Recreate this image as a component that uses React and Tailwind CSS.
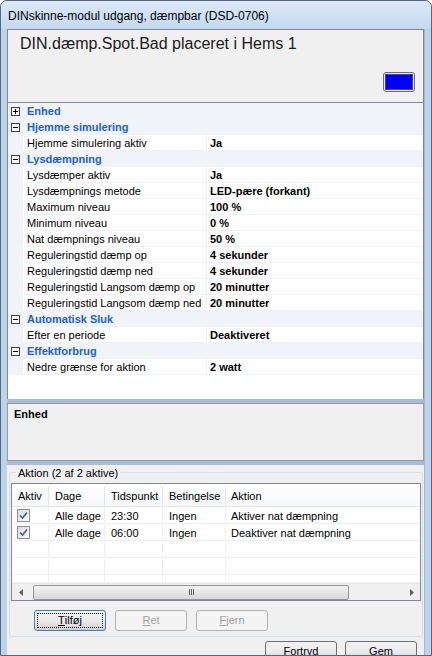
import React from "react";

const rows = [
  { cat: "Enhed", open: false },
  { cat: "Hjemme simulering", open: true },
  { name: "Hjemme simulering aktiv", value: "Ja" },
  { cat: "Lysdæmpning", open: true },
  { name: "Lysdæmper aktiv", value: "Ja" },
  { name: "Lysdæmpnings metode", value: "LED-pære (forkant)" },
  { name: "Maximum niveau", value: "100 %" },
  { name: "Minimum niveau", value: "0 %" },
  { name: "Nat dæmpnings niveau", value: "50 %" },
  { name: "Reguleringstid dæmp op", value: "4 sekunder" },
  { name: "Reguleringstid dæmp ned", value: "4 sekunder" },
  { name: "Reguleringstid Langsom dæmp op", value: "20 minutter" },
  { name: "Reguleringstid Langsom dæmp ned", value: "20 minutter" },
  { cat: "Automatisk Sluk", open: true },
  { name: "Efter en periode", value: "Deaktiveret" },
  { cat: "Effektforbrug", open: true },
  { name: "Nedre grænse for aktion", value: "2 watt" },
];

const actions = [
  { dage: "Alle dage", tid: "23:30", bet: "Ingen", akt: "Aktiver nat dæmpning" },
  { dage: "Alle dage", tid: "06:00", bet: "Ingen", akt: "Deaktiver nat dæmpning" },
];

function Expander({ open }) {
  return (
    <div className="w-[9px] h-[9px] border border-[#404040] bg-white flex items-center justify-center relative">
      <div className="w-[5px] h-[1px] bg-black" />
      {!open && <div className="absolute w-[1px] h-[5px] bg-black" />}
    </div>
  );
}

function Check() {
  return (
    <div className="w-[13px] h-[13px] border border-[#8f8f8f] bg-gradient-to-br from-[#dcdcdc] to-[#fbfbfb] flex items-center justify-center">
      <svg width="9" height="9" viewBox="0 0 9 9">
        <path d="M1 4.5 L3.5 7 L8 1.5" stroke="#4a5f97" strokeWidth="1.7" fill="none" />
      </svg>
    </div>
  );
}

function Btn({ u, rest, disabled, def }) {
  return (
    <div
      className={
        "w-[72px] h-[21px] rounded-[3px] flex items-center justify-center text-[11px] " +
        (disabled
          ? "border border-[#adb2b5] bg-[#f4f4f4] text-[#a0a0a0]"
          : def
          ? "border border-[#3c7fb1] bg-gradient-to-b from-[#f2f2f2] via-[#ebebeb] to-[#cfcfcf] text-black"
          : "border border-[#707070] bg-gradient-to-b from-[#f2f2f2] via-[#ebebeb] to-[#cfcfcf] text-black")
      }
    >
      <div
        className={
          "flex items-center justify-center " +
          (def ? "w-[66px] h-[15px] border border-dotted border-black" : "")
        }
      >
        <span className="underline">{u}</span>
        <span>{rest}</span>
      </div>
    </div>
  );
}

export default function App() {
  return (
    <div
      className="w-[432px] h-[656px] overflow-hidden flex flex-col bg-[#bcd3ec] border border-[#56677c] rounded-t-[7px]"
      style={{ fontFamily: '"Liberation Sans", Arial, sans-serif' }}
    >
      {/* title bar */}
      <div className="h-[28px] shrink-0 flex items-center pl-[7px] pt-[2px] bg-gradient-to-b from-[#dde9f7] via-[#d0e1f4] to-[#c3d8ef] text-[12px] text-black rounded-t-[6px]">
        DINskinne-modul udgang, dæmpbar (DSD-0706)
      </div>

      <div className="flex flex-1 min-h-0">
        <div className="w-[6px] shrink-0 bg-[#bcd3ec]" />
        <div className="w-[417px] shrink-0 flex flex-col bg-[#f0f0f0]">
          {/* header */}
          <div className="h-[74px] shrink-0 border border-[#828790] bg-[#f0f0f0] flex flex-col px-[12px] pt-[4px]">
            <div className="text-[16px] text-[#1a1a1a] leading-[20px]">DIN.dæmp.Spot.Bad placeret i Hems 1</div>
            <div className="flex justify-end mt-[18px] -mr-[4px]">
              <div className="w-[32px] h-[20px] rounded-[3px] border border-[#6e6e6e] bg-[#f0f0f0] p-[1px]">
                <div className="w-full h-full bg-[#0000ff] border border-[#4040c0]" />
              </div>
            </div>
          </div>

          {/* property grid */}
          <div className="h-[296px] shrink-0 bg-white border-x border-[#828790] flex flex-col">
            {rows.map((r, i) =>
              r.cat ? (
                <div key={i} className="h-[16px] flex items-center bg-[#f0f3f8] border-b border-[#eef1f6] pt-[1px]">
                  <div className="w-[15px] pl-[3px] flex items-center">
                    <Expander open={r.open} />
                  </div>
                  <div className="pl-[4px] text-[11px] font-bold text-[#2160d6] leading-none">{r.cat}</div>
                </div>
              ) : (
                <div key={i} className="h-[16px] flex items-stretch">
                  <div className="w-[15px] bg-[#f0f3f8]" />
                  <div className="w-[184px] border-b border-r border-[#eef1f6] pl-[4px] pt-[1px] flex items-center text-[11px] text-black leading-none whitespace-nowrap">
                    {r.name}
                  </div>
                  <div className="flex-1 border-b border-[#eef1f6] pl-[3px] pt-[1px] flex items-center text-[11px] font-bold text-black leading-none">
                    {r.value}
                  </div>
                </div>
              )
            )}
            <div className="flex-1" />
          </div>

          <div className="h-[4px] shrink-0 bg-[#a6bedb]" />

          {/* description */}
          <div className="h-[58px] shrink-0 border border-[#9a9a9a] bg-[#f0f0f0] pl-[6px] pt-[2px]">
            <div className="text-[11px] font-bold text-black">Enhed</div>
          </div>

          <div className="h-[4px] shrink-0 bg-[#a6bedb]" />

          {/* lower area */}
          <div className="flex-1 flex flex-col pl-[2px] pr-[1px]">
            <div className="relative mt-[7px] h-[165px] border border-[#d5dfe5] rounded-[3px] flex flex-col pl-[1px] pr-[1px] pt-[10px]">
              <div className="absolute -top-[6px] left-[6px] px-[2px] bg-[#f0f0f0] text-[11px] leading-[13px] text-black whitespace-nowrap">
                Aktion (2 af 2 aktive)
              </div>

              {/* list view */}
              <div className="h-[118px] border border-[#828790] bg-white flex flex-col text-[11px] text-black whitespace-nowrap">
                <div className="h-[23px] shrink-0 flex border-b border-[#e5e5e5] bg-gradient-to-b from-white to-[#f7f8fa] pt-[2px]">
                  <div className="w-[37px] pl-[6px] flex items-center border-r border-[#e3e5e8]">Aktiv</div>
                  <div className="w-[56px] pl-[6px] flex items-center border-r border-[#e3e5e8]">Dage</div>
                  <div className="w-[58px] pl-[6px] flex items-center border-r border-[#e3e5e8]">Tidspunkt</div>
                  <div className="w-[63px] pl-[6px] flex items-center border-r border-[#e3e5e8]">Betingelse</div>
                  <div className="flex-1 pl-[5px] flex items-center">Aktion</div>
                </div>
                {[0, 1, 2, 3, 4].map((i) => {
                  const a = actions[i];
                  const h = i === 4 ? "h-[8px]" : "h-[17px] pt-[1px]";
                  return (
                    <div key={i} className={h + " shrink-0 flex border-b border-[#f0f0f0] overflow-hidden"}>
                      <div className="w-[37px] pl-[5px] flex items-center border-r border-[#f0f0f0]">
                        {a && <Check />}
                      </div>
                      <div className="w-[56px] pl-[6px] pt-[1px] flex items-center border-r border-[#f0f0f0]">{a && a.dage}</div>
                      <div className="w-[58px] pl-[6px] pt-[1px] flex items-center border-r border-[#f0f0f0]">{a && a.tid}</div>
                      <div className="w-[63px] pl-[6px] pt-[1px] flex items-center border-r border-[#f0f0f0]">{a && a.bet}</div>
                      <div className="flex-1 pl-[5px] pt-[1px] flex items-center">{a && a.akt}</div>
                    </div>
                  );
                })}
                {/* scrollbar */}
                <div className="h-[17px] shrink-0 flex items-center bg-[#f0f0f0] border-t border-[#e8e8e8]">
                  <div className="w-[17px] h-full flex items-center justify-center">
                    <svg width="4" height="7" viewBox="0 0 4 7"><path d="M4 0 L0 3.5 L4 7 Z" fill="#606060" /></svg>
                  </div>
                  <div className="w-[316px] h-[15px] ml-[4px] rounded-[2px] border border-[#979797] bg-gradient-to-b from-[#f3f3f3] to-[#d8d8d8] flex items-center justify-center">
                    <div className="flex gap-[1px]">
                      <div className="w-[1px] h-[6px] bg-[#606060]" />
                      <div className="w-[1px] h-[6px] bg-[#606060]" />
                      <div className="w-[1px] h-[6px] bg-[#606060]" />
                    </div>
                  </div>
                  <div className="flex-1" />
                  <div className="w-[17px] h-full flex items-center justify-center">
                    <svg width="4" height="7" viewBox="0 0 4 7"><path d="M0 0 L4 3.5 L0 7 Z" fill="#606060" /></svg>
                  </div>
                </div>
              </div>

              <div className="flex gap-[9px] mt-[9px] pl-[23px]">
                <Btn u="T" rest="ilføj" def />
                <Btn u="R" rest="et" disabled />
                <Btn u="F" rest="jern" disabled />
              </div>
            </div>

            <div className="flex justify-end gap-[8px] mt-[4px] pr-[6px]">
              <Btn u="" rest="Fortryd" />
              <Btn u="" rest="Gem" />
            </div>
          </div>
        </div>
        <div className="flex-1 bg-[#bcd3ec] border-l border-[#9fb7d3]" />
      </div>
    </div>
  );
}
